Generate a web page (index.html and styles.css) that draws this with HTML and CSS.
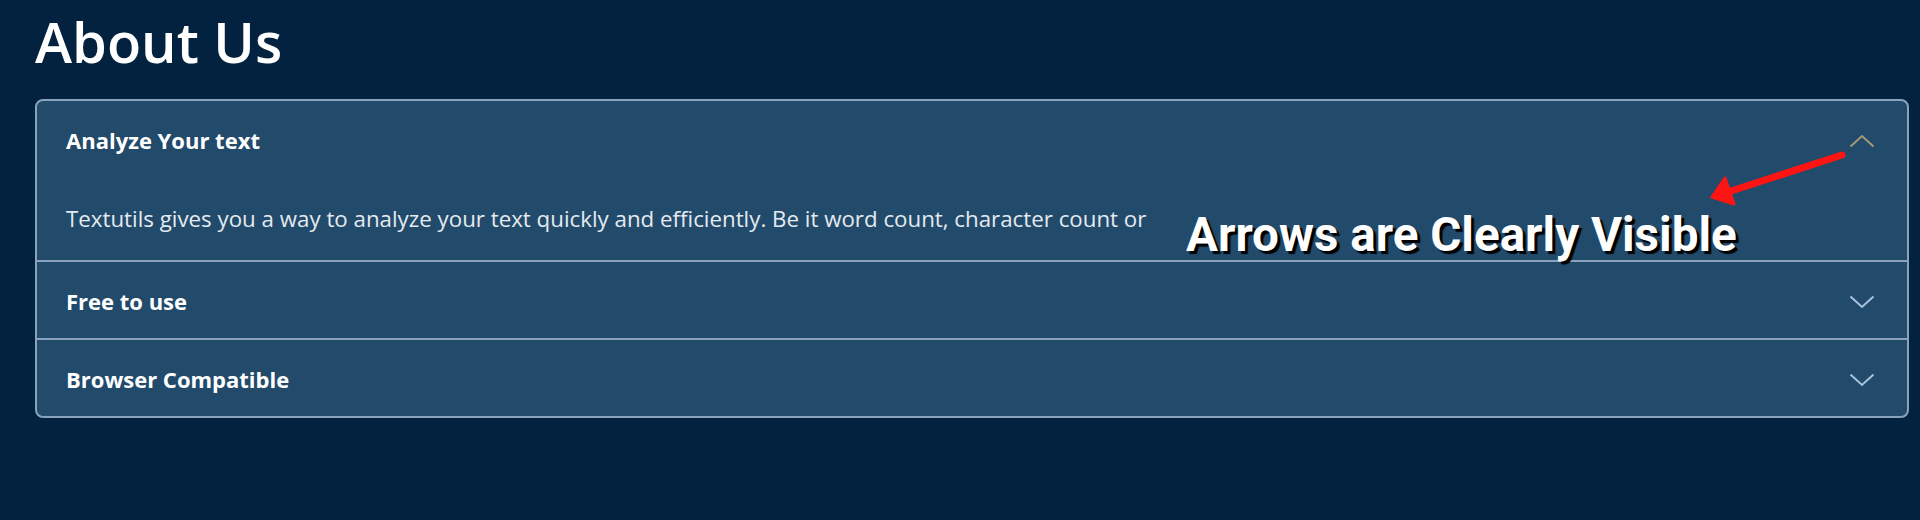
FILE: index.html
```html
<!DOCTYPE html>
<html lang="en">
<head>
<meta charset="utf-8">
<title>About Us</title>
<link rel="stylesheet" href="styles.css">
</head>
<body>
<main class="page">
  <h1 class="title">About Us</h1>
  <div class="accordion">
    <section class="item">
      <div class="item-header">
        <span class="item-title">Analyze Your text</span>
        <svg class="chev chev-up" width="26" height="14" viewBox="0 0 26 14"><path d="M1.5 12.5 L13 2 L24.5 12.5" fill="none" stroke="currentColor" stroke-width="2"/></svg>
      </div>
      <div class="item-body">Textutils gives you a way to analyze your text quickly and efficiently. Be it word count, character count or</div>
    </section>
    <section class="item">
      <div class="item-header">
        <span class="item-title">Free to use</span>
        <svg class="chev" width="26" height="14" viewBox="0 0 26 14"><path d="M1.5 1.5 L13 12 L24.5 1.5" fill="none" stroke="currentColor" stroke-width="2"/></svg>
      </div>
    </section>
    <section class="item">
      <div class="item-header">
        <span class="item-title">Browser Compatible</span>
        <svg class="chev" width="26" height="14" viewBox="0 0 26 14"><path d="M1.5 1.5 L13 12 L24.5 1.5" fill="none" stroke="currentColor" stroke-width="2"/></svg>
      </div>
    </section>
  </div>
</main>
<div class="note">
  <svg class="note-arrow" width="160" height="80" viewBox="0 0 160 80">
    <line x1="142" y1="15" x2="28" y2="52" stroke="#ff1414" stroke-width="7" stroke-linecap="round"/>
    <polygon points="12,57 25,38 34,64" fill="#ff1414" stroke="#ff1414" stroke-width="3" stroke-linejoin="round"/>
  </svg>
  <div class="note-text">Arrows are Clearly Visible</div>
</div>
</body>
</html>
```
FILE: styles.css
```css
html, body {
  margin: 0;
  padding: 0;
}
body {
  background: #03223f;
  color: #ffffff;
  font-family: "Open Sans", "Noto Sans", sans-serif;
  width: 1920px;
  height: 520px;
  overflow: hidden;
  position: relative;
}
.page {
  padding: 0 11px 0 35px;
}
.title {
  margin: 6px 0 23px 0;
  font-size: 56px;
  line-height: 70px;
  font-weight: 600;
  color: #ffffff;
}
.accordion {
  border: 2px solid #8aa3bd;
  border-radius: 8px;
  background: #224a6b;
  overflow: hidden;
}
.item + .item {
  border-top: 2px solid #8aa3bd;
}
.item-header {
  display: flex;
  align-items: center;
  justify-content: space-between;
  height: 76px;
  box-sizing: border-box;
  padding: 3px 32px 0 29px;
}
.item-title {
  font-size: 22px;
  line-height: 33px;
  font-weight: 700;
  color: #ffffff;
}
.chev {
  display: block;
  color: #a9c3dc;
}
.chev-up {
  color: #a49a78;
}
.item-body {
  padding: 25px 29px 25px 29px;
  font-size: 22.3px;
  line-height: 33px;
  color: #e4eaf0;
}
.note {
  position: absolute;
  left: 0;
  top: 0;
}
.note-arrow {
  position: absolute;
  left: 1700px;
  top: 140px;
}
.note-text {
  position: absolute;
  left: 1186px;
  top: 207px;
  white-space: nowrap;
  font-family: Roboto, "Liberation Sans", sans-serif;
  font-weight: 700;
  font-size: 47.6px;
  line-height: 56px;
  color: #ffffff;
  text-shadow: 3px 3px 1px #000000;
}
```
